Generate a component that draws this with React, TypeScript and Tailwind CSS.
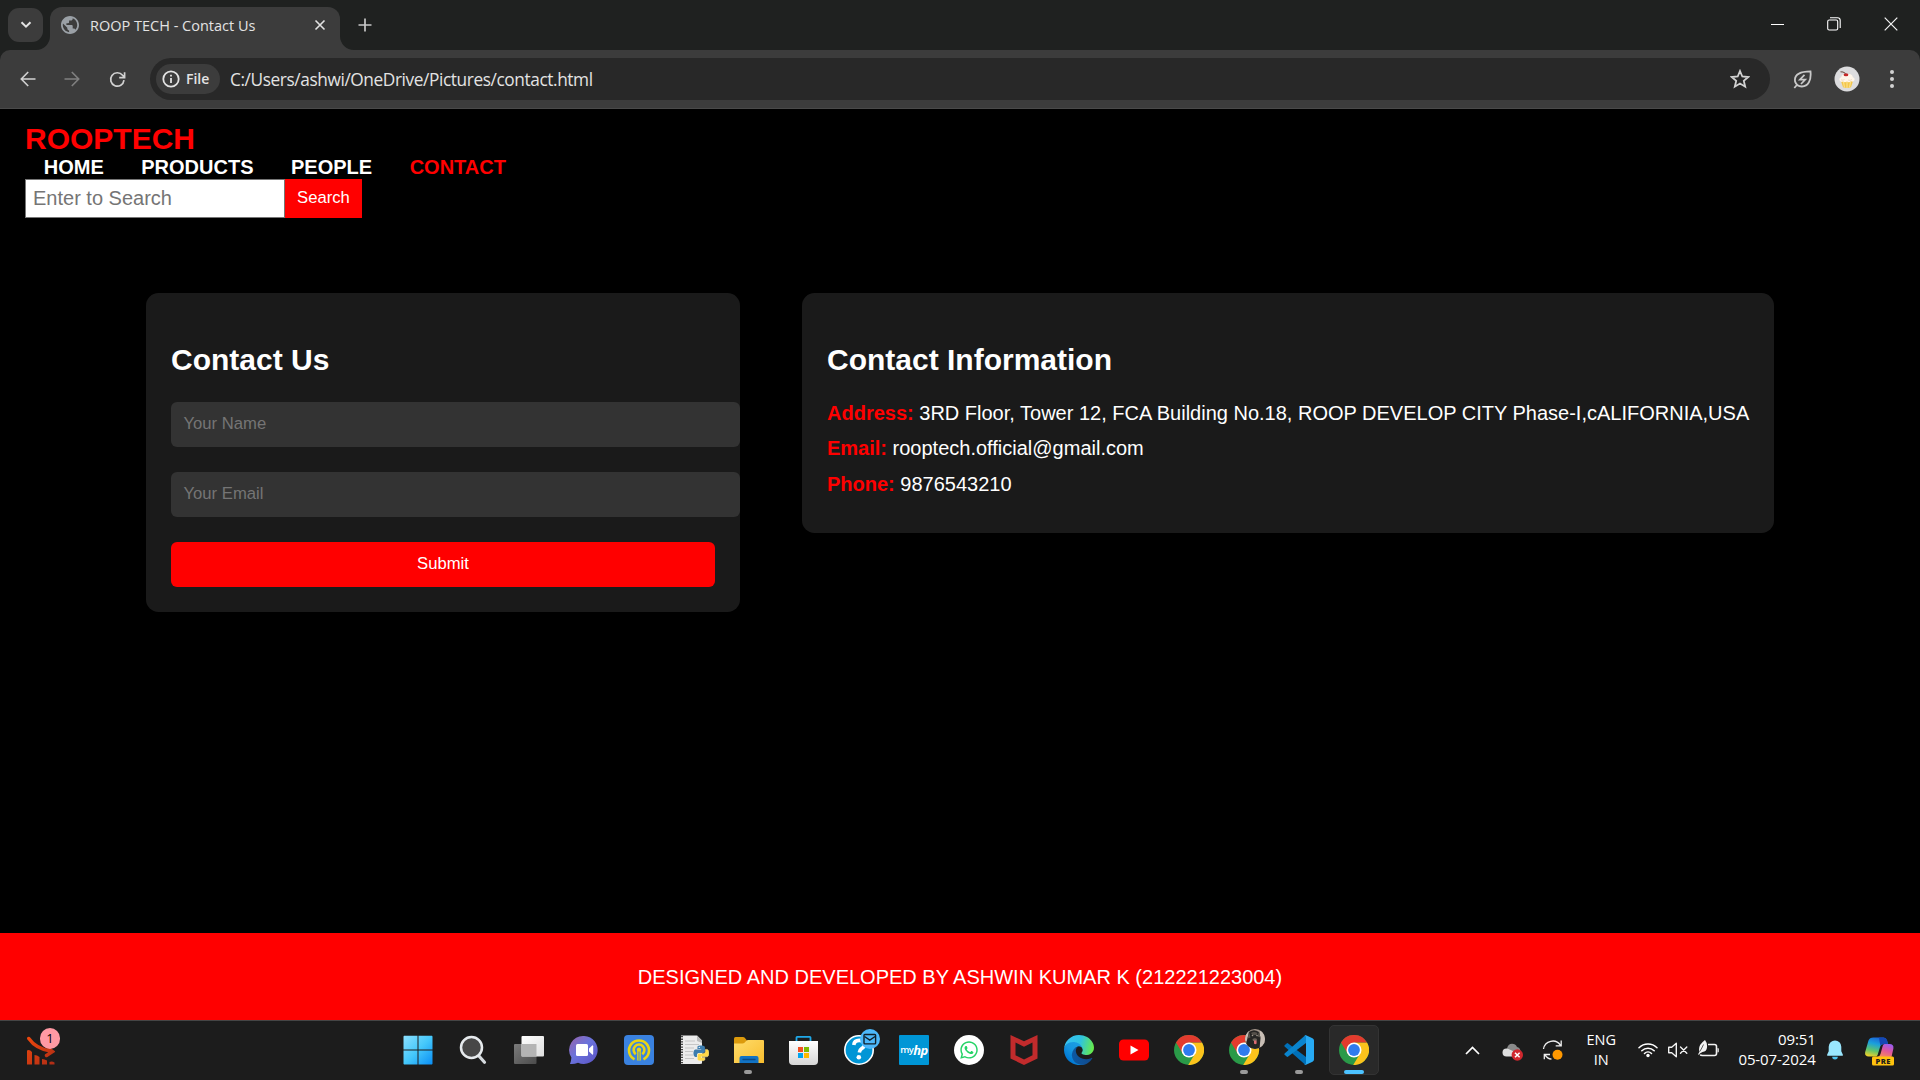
import React from "react";
import { FaWhatsapp } from "react-icons/fa";

const ui = "font-['Open_Sans','Noto_Sans',sans-serif]";

/* ---------- browser chrome icons ---------- */

const Globe = () => (
  <svg width="18" height="18" viewBox="2 2 20 20">
    <path
      d="M12 2C6.480 2 2 6.480 2 12s4.480 10 10 10 10-4.480 10-10S17.520 2 12 2zm-1 17.930c-3.950-.49-7-3.850-7-7.930 0-.62.08-1.210.21-1.790L9 15v1c0 1.100.9 2 2 2v1.930zm6.900-2.540c-.26-.81-1-1.390-1.900-1.390h-1v-3c0-.55-.45-1-1-1H8v-2h2c.55 0 1-.45 1-1V7h2c1.100 0 2-.9 2-2v-.41c2.930 1.190 5 4.060 5 7.410 0 2.080-.8 3.970-2.100 5.390z"
      fill="#9aa0a6"
    />
  </svg>
);

const Cupcake = () => (
  <svg width="26" height="26" viewBox="0 0 26 26">
    <circle cx="13" cy="13" r="12.500" fill="#dcdcde" />
    <path d="M7 15h12l-2 6.300q-4 1.200-8 0z" fill="#f3c64b" />
    <path d="M9.500 16l1 5.500M13 16v6M16.500 16l-1 5.500" stroke="#fbe08a" strokeWidth="1.200" />
    <path d="M5.600 14.500q-1-2.300 1.600-3.300.6-3.200 3.800-3.200h4.200q3.200.2 3.600 3.200 2.600.8 1.500 3.300-1.400 1.800-3.300.8-2 1.600-4 .3-2 1.300-4 0-2 .9-3.400-1.100z" fill="#fff6ea" />
    <path d="M7 13.800q2 1 3.500-.3M14 14q2 1 4-.5" stroke="#ecd5bf" strokeWidth=".8" fill="none" />
    <ellipse cx="12" cy="8.800" rx="2.400" ry="1.500" fill="#c62828" />
    <path d="M11.500 7.400Q9 5.400 6.500 5.800" stroke="#5b3a2a" strokeWidth=".9" fill="none" />
  </svg>
);

/* ---------- task bar icons ---------- */

const Stocks = () => (
  <svg width="28" height="29" viewBox="0 0 28 29">
    <defs>
      <linearGradient id="st" x1="0" y1="0" x2="28" y2="28" gradientUnits="userSpaceOnUse">
        <stop offset="0" stopColor="#f0480c" />
        <stop offset="1" stopColor="#ad2c16" />
      </linearGradient>
    </defs>
    <path d="M1.800 2.500Q9 13 24.500 15.300M19.500 19.500l6-4-3.500-2.500" stroke="url(#st)" strokeWidth="3.400" fill="none" strokeLinecap="round" />
    <path d="M0 14.500q2.500-1.500 5 1.500v12.500H0zM7.500 19q2.500 0 5 2v7.500h-5zM15 23q2.500 0 5 1.500v4h-5zM22.500 26q2.500-1 5 .5v2h-5z" fill="url(#st)" />
  </svg>
);

const Start = () => (
  <svg width="30" height="30" viewBox="0 0 30 30">
    <defs>
      <linearGradient id="wn" x1="0" y1="0" x2="1" y2="1">
        <stop offset="0" stopColor="#8ce0ff" />
        <stop offset=".5" stopColor="#45c8fb" />
        <stop offset="1" stopColor="#0a8ef5" />
      </linearGradient>
    </defs>
    <path d="M1 .8h13.500v13.700H.500V1.500zM15.500.800H29l.5.700v13H15.500zM.5 15.500h14v14H1l-.5-.7zM15.500 15.500h14v13.300l-.5.700H15.500z" fill="url(#wn)" />
  </svg>
);

const Search = () => (
  <svg width="30" height="30" viewBox="0 0 30 30" className="ml-[3px]">
    <path d="M19.500 20.500l6 6.800" stroke="#d5dade" strokeWidth="3.200" strokeLinecap="round" />
    <circle cx="12.500" cy="12.500" r="10.500" fill="#474747" stroke="#e6eaed" strokeWidth="2.500" />
  </svg>
);

const TaskView = () => (
  <svg width="30" height="30" viewBox="0 0 30 30" className="ml-[2px]">
    <defs>
      <linearGradient id="tva" x1="0" y1="0" x2="1" y2="1">
        <stop offset="0" stopColor="#fff" />
        <stop offset="1" stopColor="#dedede" />
      </linearGradient>
      <linearGradient id="tvb" x1="0" y1="0" x2="1" y2="1">
        <stop offset="0" stopColor="#7b7b7b" />
        <stop offset="1" stopColor="#4b4b4b" />
      </linearGradient>
    </defs>
    <rect x="0" y="9" width="22.500" height="20" rx="1" fill="url(#tvb)" />
    <rect x="7.500" y="1" width="22.500" height="20.500" rx="1" fill="url(#tva)" />
    <path d="M7.500 9h15v12.500h-15z" fill="#b4b4b4" />
  </svg>
);

const Chat = () => (
  <svg width="30" height="30" viewBox="0 0 30 30" className="ml-[2px]">
    <defs>
      <linearGradient id="ch" x1="0" y1="0" x2="1" y2="1">
        <stop offset="0" stopColor="#9a62a8" />
        <stop offset=".45" stopColor="#6a73dc" />
        <stop offset="1" stopColor="#5b52c4" />
      </linearGradient>
    </defs>
    <path d="M15.300 1A14 14 0 1 1 9 27.800Q5 29.500 1 29q1.200-3 1.400-6.500A14 14 0 0 1 15.300 1z" fill="url(#ch)" />
    <rect x="7" y="9" width="12" height="12" rx="1.500" fill="#fff" />
    <path d="M20 13.500l3.500-3.200q.7 0 .7 1v7.400q0 1-.7 1L20 16.500z" fill="#fff" />
  </svg>
);

const Blue = () => (
  <svg width="30" height="30" viewBox="0 0 30 30" className="ml-[2px]">
    <rect width="30" height="30" rx="4" fill="#3a82e0" />
    <path d="M10.500 24.400A10 10 0 1 1 19.500 24.400" stroke="#e8d414" strokeWidth="2.600" fill="none" />
    <path d="M11.700 19.200A5.400 5.400 0 1 1 18.300 19.200" stroke="#e8d414" strokeWidth="2.600" fill="none" />
    <path d="M13.200 16a2.200 2.200 0 1 1 3.600 0v9.500h-3.600z" fill="#e8d414" />
    <path d="M15 16.500v9" stroke="#3a82e0" strokeWidth="1" />
  </svg>
);

const snake =
  "M14.25.18l.9.2.73.26.59.3.45.32.34.34.25.34.16.33.1.3.04.26.02.2-.01.13V8.5l-.05.63-.13.55-.21.46-.26.38-.3.31-.33.25-.35.19-.35.14-.33.1-.3.07-.26.04-.21.02H8.77l-.69.05-.59.14-.5.22-.41.27-.33.32-.27.35-.2.36-.15.37-.1.35-.07.32-.04.27-.02.21v3.06H3.17l-.21-.03-.28-.07-.32-.12-.35-.18-.36-.26-.36-.36-.35-.46-.32-.59-.28-.73-.21-.88-.14-1.05-.05-1.23.06-1.22.16-1.04.24-.87.32-.71.36-.57.4-.44.42-.33.42-.24.4-.16.36-.1.32-.05.24-.01h.16l.06.01h8.16v-.83H6.18l-.01-2.75-.02-.37.05-.34.11-.31.17-.28.25-.26.31-.23.38-.2.44-.18.51-.15.58-.12.64-.1.71-.06.77-.04.84-.02 1.27.05z";

const Idle = () => (
  <svg width="30" height="30" viewBox="0 0 30 30" className="ml-[1px]">
    <path d="M2 .5h16l5 5v23l-2 .5H2z" fill="#ececec" />
    <path d="M18 .5l5 5v2.500l-5-2z" fill="#bbb" />
    <path d="M3 1v28" stroke="#444" strokeWidth="2" strokeDasharray="1.300 1.300" />
    <path d="M6 6h10M6 9.500h14M6 13h9M6 16.500h8M6 20h8M6 23.500h9" stroke="#c6c6c6" strokeWidth="1" />
    <g transform="translate(14.500 10.500) scale(.64)">
      <path d={snake} fill="#3d7dae" />
      <path d={snake} fill="#ffd845" stroke="#fff3b8" strokeWidth=".7" transform="rotate(180 12 12)" />
      <circle cx="9" cy="3" r="1" fill="#fff" />
    </g>
  </svg>
);

const Folder = () => (
  <svg width="30" height="30" viewBox="0 0 30 30" className="ml-[2px]">
    <defs>
      <linearGradient id="fd" x1="0" y1="0" x2="1" y2="1">
        <stop offset="0" stopColor="#ffdc6b" />
        <stop offset="1" stopColor="#f8bd2e" />
      </linearGradient>
    </defs>
    <path d="M0 3.500Q0 2 1.500 2H9q1 0 1.700.8L13 5.500V10H0z" fill="#dc9a0c" />
    <path d="M0 8.500h8.500q1.200 0 2-.8l1.800-1.900q.7-.8 1.700-.8h15q1 0 1 1v22H0z" fill="url(#fd)" />
    <path d="M5.500 28v-5q0-2 2-2h15q2 0 2 2v5z" fill="#1273c4" />
    <path d="M9 24.500h12" stroke="#0b4a86" strokeWidth="1.300" strokeLinecap="round" />
  </svg>
);

const Store = () => (
  <svg width="30" height="30" viewBox="0 0 30 30">
    <defs>
      <linearGradient id="so" x1="0" y1="0" x2="0" y2="1">
        <stop offset="0" stopColor="#fff" />
        <stop offset="1" stopColor="#d6d6d6" />
      </linearGradient>
    </defs>
    <path d="M1 6h29v20q0 4-4 4H5q-4 0-4-4z" fill="url(#so)" />
    <path d="M8.500 6V2.500q0-.7.700-.7h12.600q.7 0 .7.700V6" stroke="#1fa8e8" strokeWidth="1.800" fill="none" />
    <path d="M10 12h5v5h-5z" fill="#f25022" />
    <path d="M16 12h5v5h-5z" fill="#7fba00" />
    <path d="M10 18h5v5h-5z" fill="#00a4ef" />
    <path d="M16 18h5v5h-5z" fill="#ffb900" />
  </svg>
);

const Help = () => (
  <svg width="36" height="36" viewBox="0 0 36 36" className="mb-[6px] ml-[7px]">
    <circle cx="15" cy="21" r="14.200" fill="#0096d6" stroke="#fff" strokeWidth="1.600" />
    <path d="M9.800 16q.4-4.600 5.400-4.600t5.200 4q0 2.400-2.700 4.200-2.200 1.500-2.400 3.900" stroke="#fff" strokeWidth="3.600" fill="none" />
    <circle cx="14.800" cy="28.300" r="2.300" fill="#fff" />
    <circle cx="26" cy="10" r="10" fill="#4cb8fb" />
    <rect x="20" y="5.500" width="11.600" height="9.400" rx=".8" stroke="#10212c" strokeWidth="1.400" fill="none" />
    <path d="M20.500 7.500l5.300 3.600 5.300-3.600" stroke="#10212c" strokeWidth="1.300" fill="none" />
  </svg>
);

const MyHp = () => (
  <div className="ml-[1px] flex h-[30px] w-[30px] items-center justify-center rounded-[1px] bg-[#0096d6] font-['Open_Sans',sans-serif] leading-none tracking-[-0.6px] text-white">
    <span className="text-[9.500px] font-semibold">my</span>
    <span className="text-[13px] font-bold italic">hp</span>
  </div>
);

const WhatsApp = () => (
  <div className="ml-[1px] flex h-[30px] w-[30px] items-center justify-center rounded-full bg-white">
    <FaWhatsapp size={20} color="#25d366" />
  </div>
);

const McAfee = () => (
  <svg width="30" height="30" viewBox="0 0 30 30">
    <path d="M1.500 0L15 6.300 28.500 0v23.500L15 30 1.500 23.500zM6.500 7.500v12.700L15 24.500l8.500-4.300V7.500L15 11.700z" fill="#c12b2c" fillRule="evenodd" />
  </svg>
);

const Edge = () => (
  <svg width="30" height="30" viewBox="0 0 256 256">
    <defs>
      <linearGradient id="ea" x1="63" y1="177" x2="241" y2="177" gradientUnits="userSpaceOnUse">
        <stop offset="0" stopColor="#0c59a4" />
        <stop offset="1" stopColor="#114a8b" />
      </linearGradient>
      <linearGradient id="eb" x1="157" y1="100" x2="46" y2="222" gradientUnits="userSpaceOnUse">
        <stop offset="0" stopColor="#1b9de2" />
        <stop offset=".5" stopColor="#1595df" />
        <stop offset="1" stopColor="#0078d4" />
      </linearGradient>
      <linearGradient id="ec" x1="20" y1="60" x2="245" y2="120" gradientUnits="userSpaceOnUse">
        <stop offset="0" stopColor="#35c1f1" />
        <stop offset=".5" stopColor="#2fc3df" />
        <stop offset="1" stopColor="#66eb4c" />
      </linearGradient>
    </defs>
    <path fill="url(#ea)" d="M235.7 195.5a93.700 93.700 0 0 1-10.600 4.700 101.900 101.900 0 0 1-35.900 6.400c-47.300 0-88.500-32.500-88.500-74.300a31.500 31.500 0 0 1 16.400-27.300c-42.800 1.800-53.800 46.400-53.800 72.500 0 73.900 68.100 81.400 82.800 81.400 7.900 0 19.800-2.300 27-4.600l1.300-.4a128.300 128.300 0 0 0 66.600-52.800 4 4 0 0 0-5.300-5.600z" />
    <path fill="url(#eb)" d="M105.700 241.400A79.200 79.200 0 0 1 83 220a80.700 80.700 0 0 1 29.500-120c3.200-1.500 8.500-4.100 15.600-4a32.400 32.400 0 0 1 25.700 13 31.900 31.900 0 0 1 6.300 18.700c0-.2 24.500-79.600-80-79.600-43.900 0-80 41.600-80 78.200a130.200 130.200 0 0 0 12.100 56 128 128 0 0 0 156.400 67 75.500 75.500 0 0 1-62.800-8z" />
    <path fill="url(#ec)" d="M152.300 148.900c-.9 1-3.400 2.500-3.400 5.600 0 2.600 1.700 5.200 4.800 7.300 14.300 10 41.400 8.600 41.500 8.600a59.600 59.600 0 0 0 30.300-8.300 61.400 61.400 0 0 0 30.400-52.900c.3-22.400-8-37.300-11.300-43.900C223.500 23.900 177.700 0 128 0A128 128 0 0 0 0 126.200c.5-36.500 36.800-66 80-66 3.500 0 23.500.3 42 10.100 16.300 8.600 24.900 18.900 30.800 29.200 6.200 10.700 7.300 24.100 7.300 29.500 0 5.300-2.700 13.300-7.800 19.900z" />
  </svg>
);

const YouTube = () => (
  <svg width="30" height="30" viewBox="0 0 30 30">
    <rect x="0" y="4.500" width="30" height="21" rx="4.500" fill="#f00" />
    <path d="M11.500 10.500l8 4.500-8 4.500z" fill="#fff" />
  </svg>
);

const ChromeArt = () => (
  <>
    <circle cx="15" cy="15" r="15" fill="#2a9a48" />
    <path d="M21.100 18.500L14.200 30A15 15 0 0 0 28 7.500H15z" fill="#fcc31c" />
    <path d="M2 7.500A15 15 0 0 1 28 7.500H15L8.900 18.700z" fill="#e33b2e" />
    <circle cx="15" cy="15" r="7.500" fill="#fff" />
    <circle cx="15" cy="15" r="5.900" fill="#2f7bee" />
  </>
);

const Chrome = () => (
  <svg width="30" height="30" viewBox="0 0 30 30">
    <ChromeArt />
  </svg>
);

const ChromeProfile = () => (
  <svg width="36" height="36" viewBox="0 0 36 36" className="mb-[6px] ml-[6px]">
    <g transform="translate(0 6)">
      <ChromeArt />
    </g>
    <clipPath id="dg">
      <circle cx="26" cy="10" r="10" />
    </clipPath>
    <g clipPath="url(#dg)">
      <rect x="16" width="20" height="20" fill="#a3968b" />
      <path d="M31 0h5v20h-5zM16 0h4v12h-4z" fill="#c8beb5" />
      <path d="M20 3q5-3.500 10 0l1.500 6-1 11H16l2-9z" fill="#262524" />
      <path d="M20 2.500l-1.500 7 3-1zM30 2.500l1.500 6-3-1z" fill="#5a554e" />
      <path d="M22 4q3-2 6.500 0l-1 2h-4z" fill="#55504a" />
      <circle cx="23.500" cy="6.500" r=".8" fill="#a39b8f" />
      <circle cx="28" cy="6.500" r=".8" fill="#a39b8f" />
      <path d="M23.500 10q2.500-1.500 4.500 0l-.5 2h-3.500z" fill="#6b645b" />
      <path d="M25 11.500h2.600v3q-1.300 1.500-2.600 0z" fill="#e06a72" />
    </g>
  </svg>
);

const VsCode = () => (
  <svg width="30" height="30" viewBox="0 0 30 30">
    <path d="M.6 10.200L2.600 8.400q.8-.6 1.600 0L22 22v7.500q-.8.300-1.600-.5L.6 11.600q-.6-.7 0-1.400z" fill="#0070b8" />
    <path d="M.6 19.800L2.600 21.600q.8.600 1.600 0L22 8V.500q-.8-.3-1.600.5L.6 18.400q-.6.700 0 1.400z" fill="#0a84cd" />
    <path d="M22 .3l6.500 3q1.500.7 1.500 2.200v19q0 1.500-1.500 2.200l-6.500 3q-1.200.4-1.800-.5 1.800.7 1.800-1.500V2.300q0-2.200-1.800-1.500.6-.9 1.800-.5z" fill="#27aaf3" />
  </svg>
);

const Sync = () => (
  <svg width="22" height="22" viewBox="0 0 22 22" fill="none" stroke="#eee" strokeWidth="1.300">
    <path d="M1.500 10A9.300 9.300 0 0 1 18.500 6.300M19.200 1.500v5.300h-5.500" />
    <path d="M9.500 20.200A9 9 0 0 1 3 15.800M2.300 20.300v-4.800H8" />
    <circle cx="15.500" cy="15.700" r="5" fill="#ff9800" stroke="none" />
  </svg>
);

const Cloud = () => (
  <svg width="22" height="18" viewBox="0 0 22 18">
    <path d="M5 5.500Q6 .8 10 .8q3.500 0 5 3.200 3 .5 3.500 4V12H7z" fill="#8a8a8a" />
    <path d="M4.500 13.500A4 4 0 0 1 4.500 5.500q1-.1 2 .4l7.500 3.600-1 4z" fill="#dedede" />
    <circle cx="15.300" cy="12" r="5.700" fill="#d0282e" />
    <path d="M13 9.700l4.600 4.600M17.600 9.700L13 14.300" stroke="#fff" strokeWidth="1.500" />
  </svg>
);

const Wifi = () => (
  <svg width="20" height="16" viewBox="0 0 20 16" fill="none" stroke="#fff" strokeWidth="1.500" strokeLinecap="round">
    <path d="M1 5.700a12.800 12.800 0 0 1 18 0M3.800 8.700a8.800 8.800 0 0 1 12.400 0M6.500 11.500a5 5 0 0 1 7 0" />
    <circle cx="10" cy="13.500" r="1.700" fill="#fff" stroke="none" />
  </svg>
);

const Mute = () => (
  <svg width="20" height="16" viewBox="0 0 20 16" fill="none" stroke="#f2f2f2" strokeWidth="1.400" strokeLinejoin="round">
    <path d="M.7 5.200h3L8.300 1.300v13.400L3.700 10.800h-3z" />
    <path d="M12.500 4.900l6.300 6.300M18.800 4.900l-6.300 6.300" strokeLinecap="round" />
  </svg>
);

const Battery = () => (
  <svg width="22" height="18" viewBox="0 0 22 18" fill="none">
    <path d="M10 4.500h6.500q2 0 2 2v7q0 2-2 2H4.500q-2 0-2.300-1" stroke="#f2f2f2" strokeWidth="1.600" />
    <path d="M19.500 8v4.500q1.300 0 1.300-1V9q0-1-1.300-1z" fill="#f2f2f2" />
    <path d="M7 0q2.500 3 2 7.500-.4 4-4.500 4.500Q2 13 .5 15l-.3-1q1-1.300 1.200-2.200Q-.5 5.500 7 0z" fill="#f2f2f2" />
    <path d="M5.500 4.500Q4 8 1.800 11.500" stroke="#1c1c1c" strokeWidth=".7" />
  </svg>
);

const Bell = () => (
  <svg width="18" height="20" viewBox="0 0 18 20">
    <path d="M9 .5a6.300 6.300 0 0 1 6.300 6.300v4.500l1.600 3.500q.3.900-.6.900H1.700q-.9 0-.6-.9l1.600-3.500V6.800A6.300 6.300 0 0 1 9 .5z" fill="#99e6fd" />
    <path d="M6.200 16.700h5.600a2.800 2.800 0 0 1-5.600 0z" fill="#4cc2f0" />
  </svg>
);

const Copilot = () => (
  <svg width="30" height="29" viewBox="0 0 30 29">
    <defs>
      <linearGradient id="ca" x1=".6" y1="0" x2=".3" y2="1">
        <stop offset="0" stopColor="#1b62d8" />
        <stop offset=".35" stopColor="#1aa0dc" />
        <stop offset=".7" stopColor="#5fc46c" />
        <stop offset="1" stopColor="#e8d02c" />
      </linearGradient>
      <linearGradient id="cb" x1=".7" y1="0" x2=".3" y2="1">
        <stop offset="0" stopColor="#9a5cf0" />
        <stop offset=".5" stopColor="#e0569c" />
        <stop offset="1" stopColor="#f58a5a" />
      </linearGradient>
    </defs>
    <path d="M8.500.5h10q2.700 0 3.500 2.700l1 3.800h-4.500q-2.500 0-3.300 2.500l-2.600 8.500q-.7 1.500-2 1.500H3.500Q-.6 19.500.2 15L3.500 3.500Q4.500.5 8.500.5z" fill="url(#ca)" />
    <path d="M14 .500h4.500q2.700 0 3.500 2.700l1 3.800h-4.500q-2.200 0-3 2-1-4.500-1.500-8.500z" fill="#1447b4" />
    <path d="M19.500 7h5q4.500 0 3.900 4.500L26.500 20H12.500q2.300-.5 3-3l2.200-8q.5-2 1.800-2z" fill="url(#cb)" />
    <rect x="7" y="19.500" width="22" height="9" rx="1.500" fill="#ffc20e" />
    <text x="18.200" y="26.700" textAnchor="middle" fontFamily="Open Sans, sans-serif" fontWeight="800" fontSize="7.600" letterSpacing=".4" fill="#1c1c1c">
      PRE
    </text>
  </svg>
);

type App = { name: string; Icon: React.FC; state?: "open" | "active" };

const apps: App[] = [
  { name: "start", Icon: Start },
  { name: "search", Icon: Search },
  { name: "task-view", Icon: TaskView },
  { name: "chat", Icon: Chat },
  { name: "signal", Icon: Blue },
  { name: "idle", Icon: Idle },
  { name: "files", Icon: Folder, state: "open" },
  { name: "store", Icon: Store },
  { name: "help", Icon: Help },
  { name: "myhp", Icon: MyHp },
  { name: "whatsapp", Icon: WhatsApp },
  { name: "mcafee", Icon: McAfee },
  { name: "edge", Icon: Edge },
  { name: "youtube", Icon: YouTube },
  { name: "chrome", Icon: Chrome },
  { name: "chrome-profile", Icon: ChromeProfile, state: "open" },
  { name: "vscode", Icon: VsCode, state: "open" },
  { name: "chrome-active", Icon: Chrome, state: "active" },
];

function TabStrip() {
  return (
    <div className="flex h-[50px] items-start bg-[#1f2120] pl-2">
      <div className="mt-2 flex h-[34px] w-[35px] items-center justify-center rounded-[11px] bg-[#3c3c3c]">
        <svg width="12" height="8" viewBox="0 0 12 8" fill="none" stroke="#e3e3e3" strokeWidth="2">
          <path d="M1.500 1.200L6 5.700l4.500-4.500" />
        </svg>
      </div>
      <div className="relative ml-[7px] mt-[7px] flex h-[43px] w-[290px] items-center rounded-t-[12px] bg-[#3c3c3c] pb-[7px] pl-[11px] pr-[14px]">
        <svg className="absolute bottom-0 left-[-14px]" width="14" height="14">
          <path d="M14 0v14H0A14 14 0 0 0 14 0z" fill="#3c3c3c" />
        </svg>
        <svg className="absolute bottom-0 right-[-14px]" width="14" height="14">
          <path d="M0 0v14h14A14 14 0 0 1 0 0z" fill="#3c3c3c" />
        </svg>
        <Globe />
        <span className="ml-[11px] flex-1 whitespace-nowrap pt-px text-[14.500px] leading-5 text-[#e3e3e3]">ROOP TECH - Contact Us</span>
        <svg width="12" height="12" viewBox="0 0 12 12" stroke="#e3e3e3" strokeWidth="1.600">
          <path d="M1.500 1.500l9 9M10.500 1.500l-9 9" />
        </svg>
      </div>
      <svg className="ml-[18px] mt-[18px]" width="14" height="14" viewBox="0 0 14 14" stroke="#c7c7c7" strokeWidth="1.700">
        <path d="M7 .5v13M.5 7h13" />
      </svg>
      <div className="mr-[22px] mt-[17px] flex flex-1 items-center justify-end">
        <svg width="13" height="14" viewBox="0 0 13 14" stroke="#fff" strokeWidth="1">
          <path d="M0 7.500h13" />
        </svg>
        <svg className="ml-[43px]" width="14" height="14" viewBox="0 0 14 14" fill="none" stroke="#fff" strokeWidth="1.100">
          <rect x=".7" y="3" width="10" height="10" rx="1.500" />
          <path d="M3 .800h7.500q2.700 0 2.700 2.700V11" />
        </svg>
        <svg className="ml-[43px]" width="14" height="14" viewBox="0 0 14 14" stroke="#f4f4f4" strokeWidth="1.200">
          <path d="M.7.700l12.600 12.600M13.300.700L.7 13.300" />
        </svg>
      </div>
    </div>
  );
}

function Toolbar() {
  return (
    <div className="bg-[#1f2120]">
      <div className="flex h-[59px] items-center rounded-t-[10px] border-b border-[#4a4a4a] bg-[#3c3c3c] pl-5">
        <svg width="16" height="16" viewBox="0 0 16 16" fill="none" stroke="#d2d2d2" strokeWidth="1.600">
          <path d="M15.500 8H1.300M8.200 1L1.300 8l6.900 7" />
        </svg>
        <svg className="ml-[28px]" width="16" height="16" viewBox="0 0 16 16" fill="none" stroke="#808080" strokeWidth="1.600">
          <path d="M.5 8h14.200M7.800 1l6.900 7-6.900 7" />
        </svg>
        <svg className="ml-[29px]" width="17" height="17" viewBox="0 0 17 17" fill="none" stroke="#d2d2d2" strokeWidth="1.700">
          <path d="M15 9.200A6.700 6.700 0 1 1 13.600 4.300L15.500 6.300M15.600 1.200v5.400H10.200" />
        </svg>
        <div className="ml-[24px] flex h-[42px] w-[1620px] items-center rounded-full bg-[#282828] pl-[6px] pr-[20px]">
          <div className="flex h-[30px] w-[64px] items-center rounded-full bg-[#3c3c3c] pl-[6px]">
            <svg width="18" height="18" viewBox="0 0 18 18" fill="none" stroke="#e3e3e3" strokeWidth="1.800">
              <circle cx="9" cy="9" r="7.700" />
              <path d="M9 8v5M9 4.800v1.800" />
            </svg>
            <span className="ml-[6px] text-[14px] font-semibold leading-5 text-[#e3e3e3]">File</span>
          </div>
          <span className="ml-[10px] whitespace-nowrap pt-px text-[17.300px] leading-6 tracking-[-0.410px] text-[#e3e3e3]">C:/Users/ashwi/OneDrive/Pictures/contact.html</span>
          <svg className="ml-auto" width="20" height="20" viewBox="0 0 20 20" fill="none" stroke="#d2d2d2" strokeWidth="1.800">
            <path d="M10 2l2.300 5.500 6 .5-4.500 3.900 1.400 5.800L10 14.600l-5.200 3.100 1.400-5.800L1.700 8l6-.5z" />
          </svg>
        </div>
        <svg className="ml-[23px]" width="19" height="19" viewBox="0 0 19 19" fill="none" stroke="#c9c9c9" strokeWidth="1.800">
          <path d="M17.500 1.400q.7 7-1.600 10.900-2.400 4.300-7.200 4.200-5-.2-6.600-4.900-1-5.500 3.800-8Q9.500 1.500 17.500 1.400zM4.300 14.500L1.300 18" />
          <path d="M11.500 4.800L6.800 9.700h5.400L8 14" strokeWidth="1.700" />
        </svg>
        <div className="ml-[22px]">
          <Cupcake />
        </div>
        <svg className="ml-[30px]" width="4" height="18" viewBox="0 0 4 18" fill="#d2d2d2">
          <circle cx="2" cy="2" r="2" />
          <circle cx="2" cy="9" r="2" />
          <circle cx="2" cy="16" r="2" />
        </svg>
      </div>
    </div>
  );
}

function Page() {
  return (
    <div className="flex h-[911px] flex-col bg-black font-['Liberation_Sans',Arial,sans-serif] text-[20px] leading-[23px] text-white">
      <header className="px-[25px] pt-[13px]">
        <div className="text-[30px] font-bold leading-[34px] text-[#f00]">ROOPTECH</div>
        <nav className="flex gap-[37.500px] pl-[18.750px] font-bold">
          <span>HOME</span>
          <span>PRODUCTS</span>
          <span>PEOPLE</span>
          <span className="text-[#f00]">CONTACT</span>
        </nav>
        <div className="flex h-[39px]">
          <div className="flex w-[260px] items-center border border-[#767676] bg-white pl-[7px] text-[#757575]">Enter to Search</div>
          <div className="flex w-[77px] items-center justify-center bg-[#f00] pb-[3px] text-[16.670px]">Search</div>
        </div>
      </header>
      <main className="mt-[75px] flex flex-1 items-start gap-[62px] px-[146px]">
        <section className="h-[319px] w-[594px] rounded-[12.500px] bg-[#1a1a1a] pl-[25px] pt-[50px]">
          <h2 className="text-[30px] font-bold leading-[34px]">Contact Us</h2>
          <div className="mt-[25px] flex h-[45px] items-center rounded-[6px] bg-[#333] pb-[2px] pl-[12.500px] text-[16.670px] text-[#757575]">Your Name</div>
          <div className="mt-[25px] flex h-[45px] items-center rounded-[6px] bg-[#333] pb-[2px] pl-[12.500px] text-[16.670px] text-[#757575]">Your Email</div>
          <div className="mr-[25px] mt-[25px] flex h-[45px] items-center justify-center rounded-[6px] bg-[#f00] pb-[2px] text-[16.670px]">Submit</div>
        </section>
        <section className="h-[240px] w-[972px] rounded-[12.500px] bg-[#1a1a1a] pl-[25px] pt-[50px]">
          <h2 className="text-[30px] font-bold leading-[34px]">Contact Information</h2>
          <div className="mt-[25px] flex flex-col gap-3 whitespace-nowrap">
            <p>
              <b className="text-[#f00]">Address:</b> 3RD Floor, Tower 12, FCA Building No.18, ROOP DEVELOP CITY Phase-I,cALIFORNIA,USA
            </p>
            <p>
              <b className="text-[#f00]">Email:</b> rooptech.official@gmail.com
            </p>
            <p className="pt-px">
              <b className="text-[#f00]">Phone:</b> 9876543210
            </p>
          </div>
        </section>
      </main>
      <footer className="flex h-[87px] items-center justify-center bg-[#f00] pt-[2px]">DESIGNED AND DEVELOPED BY ASHWIN KUMAR K (212221223004)</footer>
    </div>
  );
}

function Taskbar() {
  return (
    <div className="flex h-[60px] items-center border-t border-[#454545] bg-[#1c1c1c] pb-px text-[15px] leading-5 text-white">
      <div className="relative w-[390px] pl-[27px]">
        <Stocks />
        <span className="absolute left-[40px] top-[-8px] flex h-[21px] w-[20px] items-center justify-center rounded-full bg-[#ff99a4] text-[13px] text-black">1</span>
      </div>
      {apps.map(({ name, Icon, state }) => (
        <div key={name} className="flex h-full w-[55.100px] shrink-0 items-center justify-center">
          <div className={state === "active" ? "relative flex h-[50px] w-[50px] items-center justify-center rounded-[5px] border border-[#333] bg-[#292929]" : "relative flex h-[50px] w-[50px] items-center justify-center"}>
            <Icon />
            {state === "open" && <span className="absolute bottom-[1px] left-[21px] h-[4px] w-[8px] rounded-full bg-[#9a9a9a]" />}
            {state === "active" && <span className="absolute bottom-0 left-[14px] h-[4px] w-[20px] rounded-full bg-[#4cc2ff]" />}
          </div>
        </div>
      ))}
      <div className="flex flex-1 items-center pl-[71px]">
        <div className="flex w-[40px] shrink-0 justify-center">
          <svg width="15" height="9" viewBox="0 0 15 9" fill="none" stroke="#fff" strokeWidth="1.700">
            <path d="M1 8l6.500-6.500L14 8" />
          </svg>
        </div>
        <div className="flex w-[40px] shrink-0 justify-center pt-[3px]">
          <Cloud />
        </div>
        <div className="flex w-[40px] shrink-0 justify-center">
          <Sync />
        </div>
        <div className="mr-1 flex w-[57px] shrink-0 flex-col items-center text-[14.500px]">
          <span>ENG</span>
          <span>IN</span>
        </div>
        <div className="flex w-[29px] shrink-0 justify-center">
          <Wifi />
        </div>
        <div className="flex w-[30px] shrink-0 justify-center">
          <Mute />
        </div>
        <div className="flex w-[32px] shrink-0 justify-center pb-[2px]">
          <Battery />
        </div>
        <div className="flex w-[91px] shrink-0 flex-col items-end pb-[3px] tracking-[-0.1px]">
          <span>09:51</span>
          <span>05-07-2024</span>
        </div>
        <div className="flex w-[38px] shrink-0 justify-center">
          <Bell />
        </div>
        <div className="flex w-[52px] shrink-0 justify-center pt-[2px]">
          <Copilot />
        </div>
      </div>
    </div>
  );
}

export default function App() {
  return (
    <div className={`h-[1080px] w-[1920px] overflow-hidden bg-black ${ui}`}>
      <TabStrip />
      <Toolbar />
      <Page />
      <Taskbar />
    </div>
  );
}
